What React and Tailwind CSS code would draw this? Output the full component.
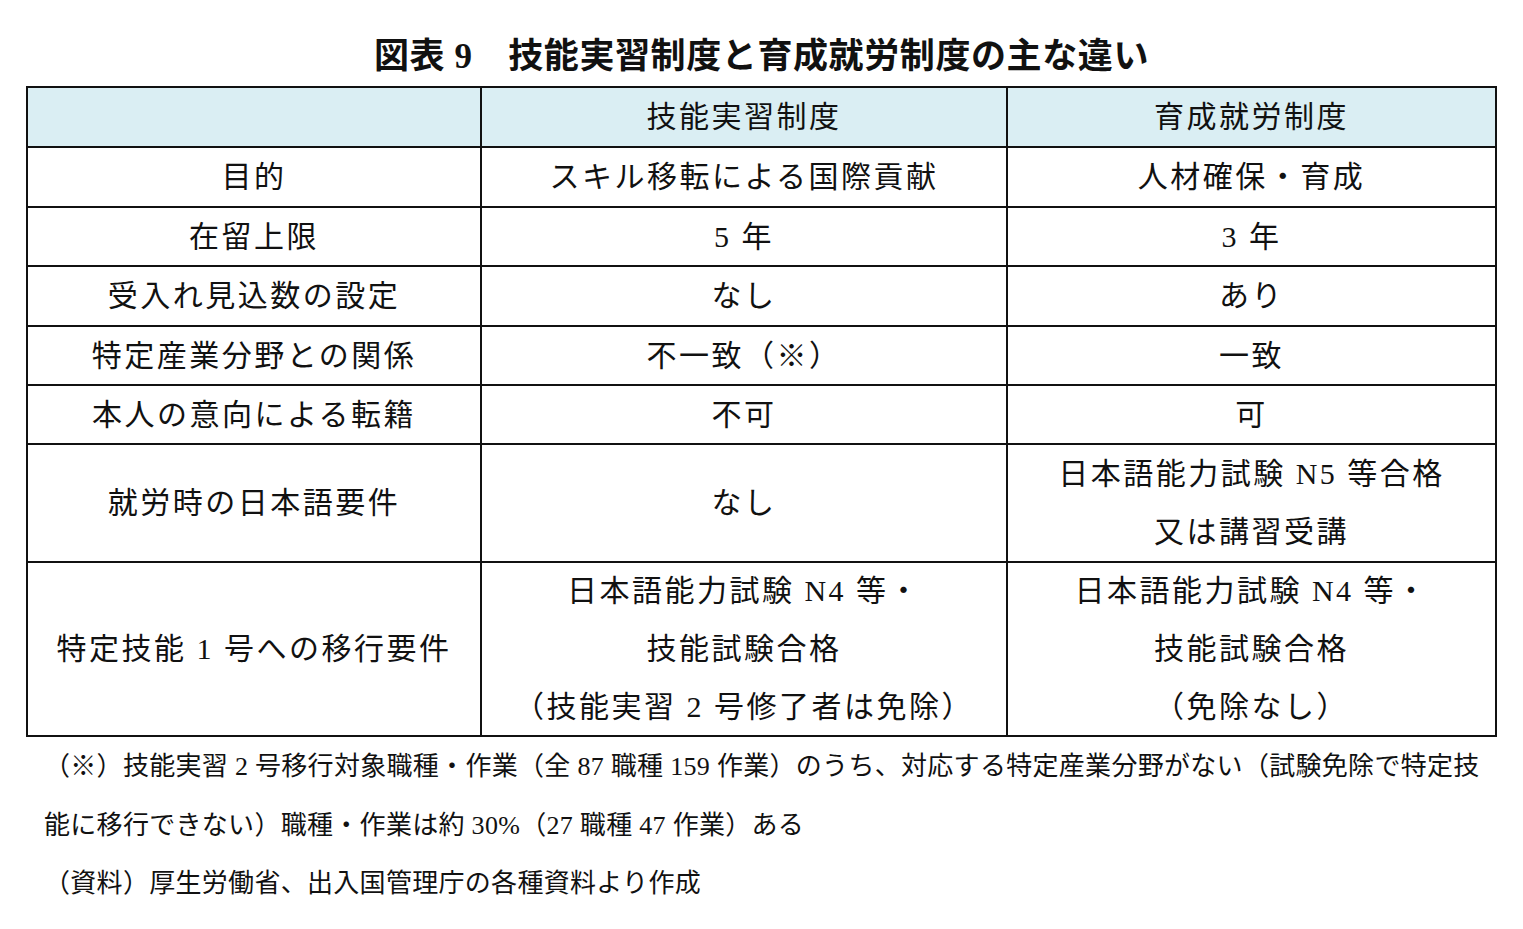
import React from "react";

const font = "font-['Liberation_Serif','Noto_Sans_CJK_JP',serif]";

function Cell({ children, head = false }) {
  return (
    <div
      className={`flex flex-col items-center justify-center border-r-2 border-b-2 border-[#111] text-[30px] leading-[58px] tracking-[2.5px] text-[#111] ${
        head ? "bg-[#daeef3]" : "bg-white"
      }`}
    >
      {children}
    </div>
  );
}

const rows = [
  [["目的"], ["スキル移転による国際貢献"], ["人材確保・育成"]],
  [["在留上限"], ["5 年"], ["3 年"]],
  [["受入れ見込数の設定"], ["なし"], ["あり"]],
  [["特定産業分野との関係"], ["不一致（※）"], ["一致"]],
  [["本人の意向による転籍"], ["不可"], ["可"]],
  [["就労時の日本語要件"], ["なし"], ["日本語能力試験 N5 等合格", "又は講習受講"]],
  [
    ["特定技能 1 号への移行要件"],
    ["日本語能力試験 N4 等・", "技能試験合格", "（技能実習 2 号修了者は免除）"],
    ["日本語能力試験 N4 等・", "技能試験合格", "（免除なし）"],
  ],
];

export default function App() {
  return (
    <div className={`w-[1523px] h-[929px] bg-white ${font} text-[#111]`}>
      <div className="h-[86px] flex items-center justify-center pt-[26px]">
        <h1 className="text-[35px] font-bold tracking-[0.6px] leading-none">
          図表 9　技能実習制度と育成就労制度の主な違い
        </h1>
      </div>
      <div className="px-[26px]">
        <div className="grid grid-cols-[454px_526px_489px] grid-rows-[60px_60px_59px_60px_59px_59px_118px_174px] border-l-2 border-t-2 border-[#111]">
          <Cell head>{""}</Cell>
          <Cell head>技能実習制度</Cell>
          <Cell head>育成就労制度</Cell>
          {rows.map((r, i) =>
            r.map((lines, j) => (
              <Cell key={`${i}-${j}`}>
                {lines.map((l, k) => (
                  <div key={k}>{l}</div>
                ))}
              </Cell>
            ))
          )}
        </div>
        <div className="pl-[18px] text-[26px] leading-[58.5px] tracking-[0.3px] pt-[1px]">
          <div>（※）技能実習 2 号移行対象職種・作業（全 87 職種 159 作業）のうち、対応する特定産業分野がない（試験免除で特定技</div>
          <div>能に移行できない）職種・作業は約 30%（27 職種 47 作業）ある</div>
          <div>（資料）厚生労働省、出入国管理庁の各種資料より作成</div>
        </div>
      </div>
    </div>
  );
}
